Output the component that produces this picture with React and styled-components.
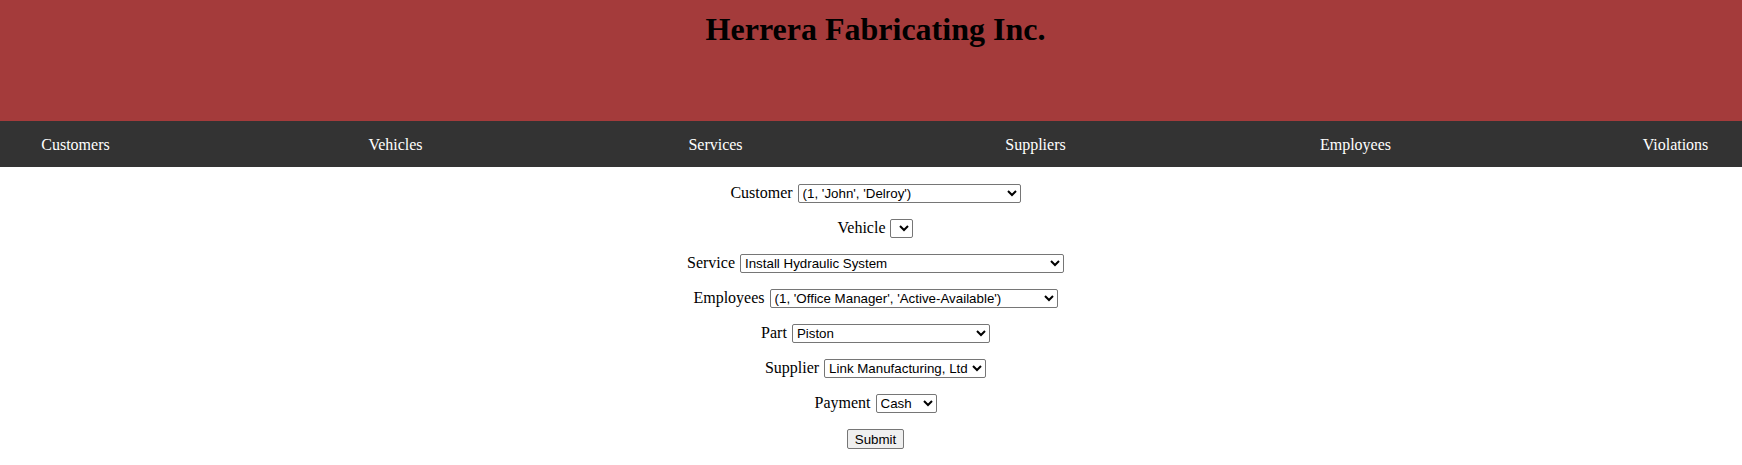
import React from 'react'
import styled, { createGlobalStyle } from 'styled-components'

const GlobalStyle = createGlobalStyle`
  html, body {
    margin: 0;
    padding: 0;
    background: #ffffff;
    font-family: "Liberation Serif", "Times New Roman", serif;
    font-size: 16px;
    color: #000000;
  }
`

const Header = styled.header`
  box-sizing: border-box;
  height: 121px;
  padding: 11px 0 0 9px;
  background: #a43b3b;
  h1 {
    margin: 0;
    text-align: center;
    font-size: 32px;
    font-weight: bold;
  }
`

const Nav = styled.nav`
  box-sizing: border-box;
  height: 46px;
  padding: 2px 0 0 9px;
  background: #333333;
  display: flex;
  align-items: center;
  justify-content: center;
  gap: 190px;
`

const NavLink = styled.a`
  width: 130px;
  flex-shrink: 0;
  text-align: center;
  color: #ffffff;
  text-decoration: none;
  font-size: 16px;
`

const Form = styled.form`
  padding: 17px 0 0 9px;
  display: flex;
  flex-direction: column;
  gap: 16px;
`

const Row = styled.div`
  display: flex;
  justify-content: center;
  align-items: baseline;
  gap: 5px;
`

const Label = styled.label`
  font-size: 16px;
`

const Select = styled.select`
  box-sizing: border-box;
  width: ${p => p.$w}px;
  height: 19px;
  font-family: "Liberation Sans", Arial, sans-serif;
  font-size: 13.333px;
  color: #000000;
  background: #ffffff;
  border: 1px solid #767676;
  border-radius: 2px;
  margin: 0;
`

const SubmitButton = styled.button`
  box-sizing: border-box;
  width: 57px;
  height: 20px;
  padding: 1px 6px;
  font-family: "Liberation Sans", Arial, sans-serif;
  font-size: 13.333px;
  color: #000000;
  background: #efefef;
  border: 1px solid #767676;
  border-radius: 2px;
`

const links = ['Customers', 'Vehicles', 'Services', 'Suppliers', 'Employees', 'Violations']

const fields = [
  { label: 'Customer', w: 223, options: ["(1, 'John', 'Delroy')"] },
  { label: 'Vehicle', w: 23, options: [] },
  { label: 'Service', w: 324, options: ['Install Hydraulic System'] },
  { label: 'Employees', w: 288, options: ["(1, 'Office Manager', 'Active-Available')"] },
  { label: 'Part', w: 198, options: ['Piston'] },
  { label: 'Supplier', w: 162, options: ['Link Manufacturing, Ltd'] },
  { label: 'Payment', w: 61, options: ['Cash', 'Credit', 'Check'] },
]

const App = () => {
  return (
    <>
      <GlobalStyle />
      <Header>
        <h1>Herrera Fabricating Inc.</h1>
      </Header>
      <Nav>
        {links.map(l => (
          <NavLink key={l} href="#">{l}</NavLink>
        ))}
      </Nav>
      <Form onSubmit={e => e.preventDefault()}>
        {fields.map(f => (
          <Row key={f.label}>
            <Label htmlFor={f.label}>{f.label}</Label>
            <Select id={f.label} $w={f.w}>
              {f.options.map(o => (
                <option key={o}>{o}</option>
              ))}
            </Select>
          </Row>
        ))}
        <Row>
          <SubmitButton type="submit">Submit</SubmitButton>
        </Row>
      </Form>
    </>
  )
}

export default App
